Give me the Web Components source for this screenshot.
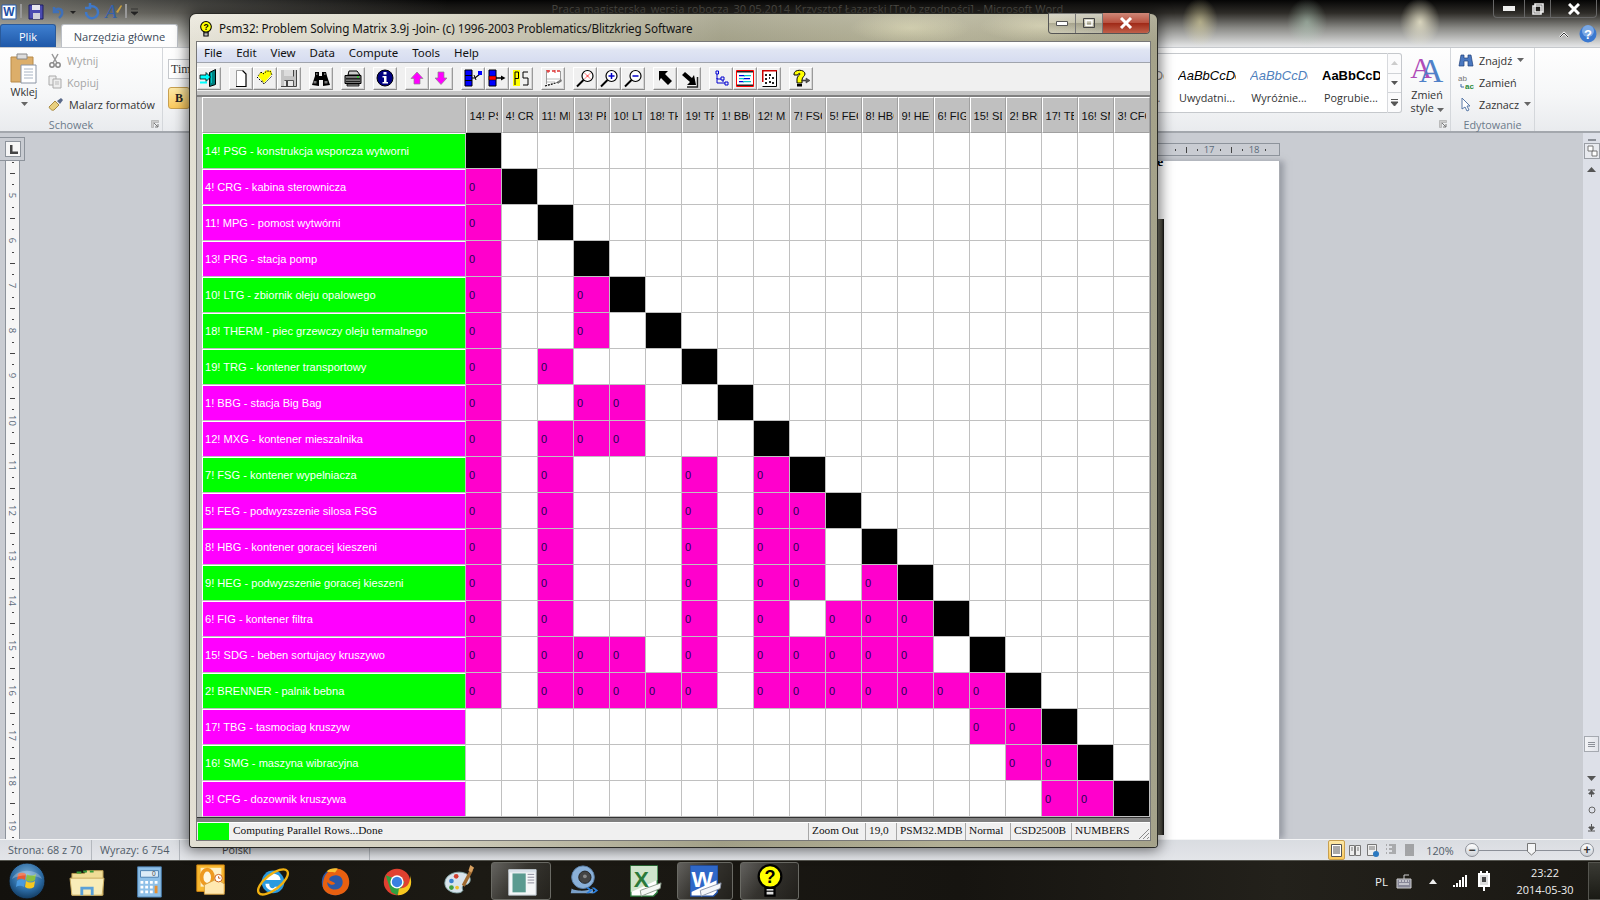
<!DOCTYPE html>
<html lang="pl">
<head>
<meta charset="utf-8">
<title>Psm32</title>
<style>
html, body { margin: 0; padding: 0; }
body { width: 1600px; height: 900px; overflow: hidden; position: relative; background: #c9ccd2; font-family: "Open Sans", "Liberation Sans", sans-serif; }
#word { display: grid; grid-template-rows: 47px 86px 706px 21px 40px; width: 1600px; height: 900px; }
</style>
</head>
<body>
<div id="word">
    <word-top></word-top>
    <word-ribbon></word-ribbon>
    <word-doc></word-doc>
    <word-status></word-status>
    <win-taskbar></win-taskbar>
</div>
<psm-window>
    <psm-menu></psm-menu>
    <psm-toolbar></psm-toolbar>
    <psm-matrix></psm-matrix>
    <psm-status></psm-status>
</psm-window>

<script>
// 工具栏图标
const TOOL_ICONS = {
    exit: `<path d="M12.500 5.500l6-3v15l-6 2z" fill="#008080" stroke="#000"/><path d="M14.500 6v10" stroke="#00c8c8"/><path d="M3 8h6V5.500l4.500 4.500L9 14.500V12H3z" fill="#00ffff" stroke="#000" stroke-width=".8"/><path d="M3 15.500h7" stroke="#00ffff" stroke-width="2"/>`,
    page: `<path d="M7.500 3.500h6l3.500 3.500v12.500H7.500z" fill="#fff"/><path d="M7.500 19.500V3.500M7.500 3.500h6" stroke="#999" fill="none"/><path d="M13.500 3.500l3.500 3.500v12.500H7" stroke="#000" fill="none" stroke-width="1.200"/>`,
    open: `<path d="M5 9l3-4 2 1 3-3 2 1 3-1 1 4-8 9z" fill="#ffff00"/><path d="M4 10l7 7 8-8M8 5l2 2 4-3 3 0 2 4" fill="none" stroke="#000" stroke-dasharray="1.500 1.200"/><path d="M5 9l3-4M11 17l-2-4" stroke="#333" stroke-dasharray="1 1"/>`,
    save: `<path d="M4 3h16v16H4z" fill="#c4c4c4"/><path d="M7 3h9v6H7z" fill="#dcdcdc"/><path d="M19.500 3v16.500H4M16.500 3v6.500" stroke="#444" fill="none"/><path d="M7.500 13.500h9v6" stroke="#555" fill="none"/><path d="M7 14h9v5H7z" fill="#e8e8e8"/><path d="M9 14h2v5H9z" fill="#444"/>`,
    binoc: `<path d="M6 5h4v4h3V5h4l1 4 3 9-7 1v-6h-4v6l-7-1 3-9z" fill="#000"/><path d="M4.500 14h3v2.500h-3zM15.500 14h3v2.500h-3z" fill="#777"/><path d="M7 6h1.500v2H7zM15 6h1.500v2H15z" fill="#666"/>`,
    print: `<path d="M8 4h8l3 4H7z" fill="#ccc" stroke="#000"/><path d="M4 8.500h16v8H4z" fill="#777" stroke="#000"/><path d="M5 11h14v1.500H5zM5 14h14v1H5z" fill="#222"/><path d="M16 9.500h2v1h-2z" fill="#0f0"/><path d="M6 17h12v2H6z" fill="#999" stroke="#000" stroke-width=".8"/>`,
    info: `<circle cx="12" cy="11" r="8" fill="#000080" stroke="#000"/><path d="M10.500 5h3v2.500h-3zM9.500 9h4v6h1.500v1.500H9.500V15H11v-4.500H9.500z" fill="#fff"/>`,
    up: `<path d="M12 5l6 6.500h-3V17H9v-5.500H6z" fill="#ff00ff" stroke="#888" stroke-width=".7"/>`,
    down: `<path d="M9 5h6v6h3l-6 6.500L6 11h3z" fill="#ff00ff" stroke="#888" stroke-width=".7"/>`,
    joina: `<path d="M4 3h7v16H4z" fill="#0000ff" stroke="#000"/><path d="M4 8.500h7M4 13.500h7" stroke="#000"/><path d="M11 11h3l5-4" stroke="#000" fill="none" stroke-width="1.200"/><path d="M13 8l2 5" stroke="#000"/><path d="M17 4h4v4h-4z" fill="#0000ff"/>`,
    joinb: `<path d="M4 3h7v16H4z" fill="#0000ff" stroke="#000"/><path d="M4 9h7v4H4z" fill="#ff0000" stroke="#000" stroke-width=".5"/><path d="M11 11h6" stroke="#000" stroke-width="1.500"/><path d="M16 8.500l4.500 2.500-4.500 2.500z" fill="#000"/>`,
    ps: `<path d="M4 3h7v16H4z" fill="#ffff00"/><path d="M6 18V5h3.500v6.500H6M14 11V5h5M14 11h5v7h-5" fill="none" stroke="#000"/>`,
    edit: `<path d="M5.500 3.500h14v14h-14z" fill="#fff"/><path d="M5 4h4M11 4h3M16 4h3" stroke="#d33" stroke-width="1.500"/><path d="M7 3v3M14 3v3" stroke="#d33"/><path d="M19.500 4v11M5.500 4v13" stroke="#999"/><path d="M6 12h13M6 15h8" stroke="#bbb"/><path d="M4 19l14-4" stroke="#000" stroke-dasharray="2 1" stroke-width="1.200"/><path d="M16 15l4-3 1 2-4 3z" fill="#777"/>`,
    zoomx: `<circle cx="14.500" cy="9" r="5.500" fill="#fff" stroke="#000" stroke-width="1.200"/><path d="M10.500 13L4 19.500" stroke="#000" stroke-width="2"/><path d="M12 11.500l5-5M12 6.500l5 5" stroke="#f00" stroke-dasharray="1.300 .6"/>`,
    zoomin: `<circle cx="14.500" cy="9" r="5.500" fill="#fff" stroke="#000" stroke-width="1.200"/><path d="M10.500 13L4 19.500" stroke="#000" stroke-width="2"/><path d="M11.500 9h6M14.500 6v6" stroke="#0000c8" stroke-width="1.500"/>`,
    zoomout: `<circle cx="14.500" cy="9" r="5.500" fill="#fff" stroke="#000" stroke-width="1.200"/><path d="M10.500 13L4 19.500" stroke="#000" stroke-width="2"/><path d="M11.500 9h6" stroke="#0000c8" stroke-width="1.500"/>`,
    nw: `<path d="M6 4h9l-3 3 7 7-4 4-7-7-2 3z" fill="#000"/>`,
    se: `<path d="M5 8l3-3 7 6 2-3 2 10h-9l3-3z" fill="#000"/><path d="M20.500 10v10H10" fill="none" stroke="#222" stroke-width="1.500"/>`,
    tree: `<path d="M7 4h2.500v3H7zM12 10h3v3h-3zM16 15h3v3h-3z" fill="none" stroke="#0000d0"/><path d="M8 7v5h4M8 11v5h8M14 13v2" fill="none" stroke="#0000d0"/>`,
    rows: `<path d="M4 4h16v15H4z" fill="#fff"/><path d="M3.500 3.500h17v16h-17z" fill="none" stroke="#f00"/><path d="M4 4h16v1.500H4zM4 17.500h16V19H4z" fill="#222"/><path d="M6 8h6v1.300H6zM10 11h7v1.300h-7zM6 14h5v1.300H6z" fill="#0000e0"/><path d="M11 8h7v1.300h-7zM6 11h5v1.300H6zM10 14h8v1.300h-8z" fill="#00c8c8"/>`,
    grid: `<path d="M5 3h15v16H5z" fill="#fff"/><path d="M19.500 3.500v16h-14" fill="none" stroke="#000"/><path d="M5 3h15v1.500H5zM5 3h1.500v12H5z" fill="#c00"/><path d="M8 7h2v2H8zM12 7h2v2h-2zM15 10h2v2h-2zM8 11h2v2H8zM12 14h2v2h-2zM8 15h2v2H8zM15 15h2v2h-2zM12 10h1v2h-1z" fill="#222"/>`,
    help: `<path d="M5 7c0-5 11-5 11 0 0 2-3 3-3 6v3H8v-4c0-3 3-4 3-5 0-1-2-1-2 1H5z" fill="#ffff00" stroke="#000"/><path d="M8 17h5v2.500H8z" fill="#000"/><path d="M13 13h4v-2l4 2.500-4 2.500v-2h-4z" fill="#555" stroke="#222" stroke-width=".5"/>`
};

const BULB = (w, h) => `<svg width="${w}" height="${h}" viewBox="0 0 24 30"><circle cx="12" cy="11" r="10" fill="#ff0" stroke="#000" stroke-width="2"/><path d="M8 21h8v7H8z" fill="#ddd" stroke="#000" stroke-width="2"/><path d="M8 24h8" stroke="#000"/><text x="12" y="17" font-family="Liberation Sans, sans-serif" font-weight="700" font-size="16" text-anchor="middle">?</text></svg>`;

class ToolBtn extends HTMLElement {
    connectedCallback() {
        this.attachShadow({ mode: 'open' });
        this.shadowRoot.innerHTML = `
        <style>
        :host { display: block; width: 24px; height: 23px; box-sizing: border-box; background: #f0f0f0;
            border: 1px solid; border-color: #fff #9a9a9a #8a8a8a #fff; box-shadow: inset -1px -1px 0 #d4d4d4; }
        svg { display: block; margin: -1px 0 0 -1px; }
        </style>
        <svg width="24" height="23" viewBox="0 0 24 23">${TOOL_ICONS[this.getAttribute('icon')]}</svg>`;
    }
}
customElements.define('tool-btn', ToolBtn);

class PsmToolbar extends HTMLElement {
    connectedCallback() {
        const groups = [['exit'], ['page', 'open', 'save'], ['binoc'], ['print'], ['info'], ['up', 'down'],
            ['joina', 'joinb', 'ps'], ['edit'], ['zoomx', 'zoomin', 'zoomout'], ['nw', 'se'], ['tree', 'rows', 'grid'], ['help']];
        this.attachShadow({ mode: 'open' });
        this.shadowRoot.innerHTML = `
        <style>
        :host { display: flex; gap: 8px; height: 28px; box-sizing: border-box; padding-top: 4px; background: #f0f0f0; }
        div { display: flex; }
        </style>
        ${groups.map(g => `<div>${g.map(i => `<tool-btn icon="${i}"></tool-btn>`).join('')}</div>`).join('')}`;
    }
}
customElements.define('psm-toolbar', PsmToolbar);

class PsmMenu extends HTMLElement {
    connectedCallback() {
        this.attachShadow({ mode: 'open' });
        this.shadowRoot.innerHTML = `
        <style>
        :host { display: flex; gap: 14px; height: 21px; box-sizing: border-box; padding: 2px 0 0 7px; color: #111;
            font: 11.500px/17px "Noto Sans", sans-serif; letter-spacing: -.05px;
            background: linear-gradient(#fff, #fff 2px, #e0e5f3 8px, #d6dcf0); border-bottom: 1px solid #a0a4ad; }
        </style>
        <span>File</span><span>Edit</span><span>View</span><span>Data</span><span>Compute</span><span>Tools</span><span>Help</span>`;
    }
}
customElements.define('psm-menu', PsmMenu);

class PsmMatrix extends HTMLElement {
    connectedCallback() {
        const rows = [['14! PSG', 'konstrukcja wsporcza wytworni', 1], ['4! CRG', 'kabina sterownicza', 0], ['11! MPG', 'pomost wytwórni', 0],
            ['13! PRG', 'stacja pomp', 0], ['10! LTG', 'zbiornik oleju opalowego', 1], ['18! THERM', 'piec grzewczy oleju termalnego', 1],
            ['19! TRG', 'kontener transportowy', 1], ['1! BBG', 'stacja Big Bag', 0], ['12! MXG', 'kontener mieszalnika', 0],
            ['7! FSG', 'kontener wypelniacza', 1], ['5! FEG', 'podwyzszenie silosa FSG', 0], ['8! HBG', 'kontener goracej kieszeni', 0],
            ['9! HEG', 'podwyzszenie goracej kieszeni', 1], ['6! FIG', 'kontener filtra', 0], ['15! SDG', 'beben sortujacy kruszywo', 0],
            ['2! BRENNER', 'palnik bebna', 1], ['17! TBG', 'tasmociag kruszyw', 0], ['16! SMG', 'maszyna wibracyjna', 1], ['3! CFG', 'dozownik kruszywa', 0]];
        // 每行里标 0 的列
        const zeros = [[], [0], [0], [0], [0, 3], [0, 3], [0, 2], [0, 3, 4], [0, 2, 3, 4], [0, 2, 6, 8], [0, 2, 6, 8, 9], [0, 2, 6, 8, 9],
            [0, 2, 6, 8, 9, 11], [0, 2, 6, 8, 10, 11, 12], [0, 2, 3, 4, 6, 8, 9, 10, 11, 12], [0, 2, 3, 4, 5, 6, 8, 9, 10, 11, 12, 13, 14],
            [14, 15], [15, 16], [16, 17]];
        let html = '<div class="hd"></div>';
        rows.forEach(r => { html += `<div class="hd"><span>${r[0]}</span></div>`; });
        rows.forEach((r, y) => {
            html += `<div class="lb ${r[2] ? 'g' : 'm'}">${r[0]} - ${r[1]}</div>`;
            rows.forEach((c, x) => {
                if (x === y) html += '<div class="c k"></div>';
                else if (zeros[y].includes(x)) html += '<div class="c p">0</div>';
                else html += '<div class="c"></div>';
            });
        });
        this.attachShadow({ mode: 'open' });
        this.shadowRoot.innerHTML = `
        <style>
        :host { display: block; padding: 6px 0 0 5px; background: linear-gradient(#c4c4c4, #c4c4c4 4px, #808080 4px, #808080 6px, #c0c0c0 6px); }
        .g0 { display: grid; grid-template-columns: 264px repeat(19, 36px); grid-auto-rows: 36px;
            font: 11.100px/1 "Liberation Sans", sans-serif; }
        .g0 > div { box-sizing: border-box; display: flex; align-items: center; white-space: nowrap; overflow: hidden; }
        .hd { background: #c0c0c0; color: #111; border-left: 1px solid #fff; border-top: 1px solid #fff; border-right: 1px solid #a0a0a0; border-bottom: 1px solid #a0a0a0; padding: 4px 3px 0 2.500px; }
        .hd span { display: block; overflow: hidden; }
        .lb { color: #fff; padding: 2px 0 0 2px; border-top: 1px solid #fff; border-left: 1px solid #fff; border-bottom: 1px solid #c0c0c0; border-right: 1px solid #c0c0c0; }
        .g { background: #00ff00; }
        .m { background: #ff00ff; }
        .c { background: #fff; border-right: 1px solid #c0c0c0; border-bottom: 1px solid #c0c0c0; padding: 2px 0 0 3px; color: #220055; }
        .k { background: #000; }
        .p { background: #ff00cc; }
        </style>
        <div class="g0">${html}</div>`;
    }
}
customElements.define('psm-matrix', PsmMatrix);

class PsmStatus extends HTMLElement {
    connectedCallback() {
        const cells = [['Zoom Out', 57], ['19,0', 31], ['PSM32.MDB', 69], ['Normal', 45], ['CSD2500B', 61], ['NUMBERS', 79]];
        this.attachShadow({ mode: 'open' });
        this.shadowRoot.innerHTML = `
        <style>
        :host { display: flex; flex-direction: column; height: 23px; box-sizing: border-box; background: #f0f0f0; border-top: 1px solid #333; font: 11.300px/14px "Liberation Serif", serif; color: #111; }
        .grey { height: 4px; background: #808080; }
        .bar { flex: 1; display: flex; border-top: 1px solid #fff; align-items: stretch; }
        .box { width: 31px; margin: 0 4px 0 1px; background: #00ff00; }
        .msg { flex: 1; }
        .cell { box-sizing: border-box; padding-left: 3px; border-left: 1px solid #a8a8a8; white-space: nowrap; overflow: hidden; }
        .grip { position: relative; width: 0; }
        svg { position: absolute; right: 0; bottom: 0; }
        </style>
        <div class="grey"></div>
        <div class="bar">
            <div class="box"></div>
            <div class="msg">Computing Parallel Rows...Done</div>
            ${cells.map(c => `<div class="cell" style="width:${c[1]}px">${c[0]}</div>`).join('')}
            <div class="grip"><svg width="14" height="14" viewBox="0 0 14 14"><path d="M13 3L3 13M13 7l-6 6M13 11l-2 2" stroke="#8a8a8a" fill="none"/></svg></div>
        </div>`;
    }
}
customElements.define('psm-status', PsmStatus);

class PsmWindow extends HTMLElement {
    connectedCallback() {
        this.attachShadow({ mode: 'open' });
        this.shadowRoot.innerHTML = `
        <style>
        :host { position: absolute; left: 190px; top: 14px; width: 967px; height: 833px; box-sizing: border-box; display: flex; flex-direction: column;
            border-radius: 6px 6px 3px 3px; box-shadow: 0 0 0 1px #2a2a26, 0 0 14px 3px rgba(0,0,0,.55);
            background: linear-gradient(rgba(255,255,255,.12), rgba(120,118,90,.08) 30px),
                radial-gradient(ellipse 60px 16px at 720px 14px, rgba(220,216,180,.7), transparent),
                radial-gradient(ellipse 60px 16px at 850px 12px, rgba(230,225,190,.6), transparent),
                linear-gradient(90deg, #ece9de, #d9d6c6 25%, #a5a38b 55%, #b7b49a 78%, #a9a68e);
            padding: 0 7px 7px 7px; }
        .title { height: 28px; display: flex; align-items: center; font: 11.700px "Noto Sans", sans-serif; color: #141414; letter-spacing: -.1px; position: relative; }
        .title svg { margin: 1px 6px 0 2px; }
        .caps { position: absolute; right: 0; top: -1px; display: flex; height: 20px; border: 1px solid #555; border-top: 0; border-radius: 0 0 4px 4px; overflow: hidden; }
        .caps div { display: flex; align-items: center; justify-content: center; width: 27px; height: 20px; background: linear-gradient(rgba(255,255,255,.4), rgba(255,255,255,.1) 50%, rgba(60,60,50,.2) 52%, rgba(255,255,255,.2)); border-right: 1px solid #777; box-sizing: border-box; }
        .caps .x { width: 46px; border: 0; background: linear-gradient(#cf8878, #b8503e 50%, #a02a18 52%, #c0604a); }
        .body { flex: 1; display: flex; flex-direction: column; background: #fff; box-shadow: 0 0 0 1px #777; overflow: hidden; }
        </style>
        <div class="title">
            ${BULB(14, 16)}<span>Psm32: Problem Solving Matrix 3.9j -Join- (c) 1996-2003 Problematics/Blitzkrieg Software</span>
            <div class="caps">
                <div><svg style="margin:0" width="12" height="6"><path d="M.5 1.500h11v4H.5z" fill="#fff" stroke="#555"/></svg></div>
                <div><svg style="margin:0" width="12" height="10"><path d="M.5.5h11v9H.5z" fill="none" stroke="#444"/><path d="M3 2.500h6v5H3z" fill="none" stroke="#fff" stroke-width="1.500"/></svg></div>
                <div class="x"><svg style="margin:0" width="14" height="12"><path d="M2 1l10 10M12 1L2 11" stroke="#fff" stroke-width="3"/></svg></div>
            </div>
        </div>
        <div class="body"><slot></slot></div>`;
    }
}
customElements.define('psm-window', PsmWindow);

class WordTop extends HTMLElement {
    connectedCallback() {
        this.attachShadow({ mode: 'open' });
        this.shadowRoot.innerHTML = `
        <style>
        :host { display: flex; flex-direction: column; position: relative; font: 11.100px "Open Sans", sans-serif;
            background:
                radial-gradient(ellipse 18px 24px at 1200px 22px, rgba(240,230,170,.55), transparent),
                radial-gradient(ellipse 20px 24px at 1307px 22px, rgba(190,220,200,.5), transparent),
                radial-gradient(ellipse 20px 24px at 1420px 22px, rgba(255,250,220,.75), transparent),
                linear-gradient(90deg, rgba(190,190,180,.55), transparent 28%, transparent 100%),
                linear-gradient(#050505, #2e2c28 13px, #8a8a86 28px, #d8d9d9 44px, #e4e5e7 47px); }
        .row1 { height: 24px; display: flex; align-items: flex-start; }
        .qat { width: 140px; height: 20px; position: relative; flex: none; }
        .qat svg { display: block; }
        .ttl { flex: 1; text-align: center; padding: 1px 18px 0 0; color: #55534c; white-space: nowrap; overflow: hidden; }
        .caps { width: 104px; margin-right: 3px; height: 18px; flex: none; display: flex; border: 1px solid #666; border-top: 0; border-radius: 0 0 4px 4px; box-sizing: border-box; }
        .caps div { display: flex; justify-content: center; align-items: center; border-right: 1px solid #666; box-sizing: border-box; }
        .row2 { height: 23px; display: flex; align-items: flex-end; position: relative; }
        .plik { width: 56px; height: 23px; background: linear-gradient(#3e7fd0, #1f58a8); color: #fff; text-align: center; line-height: 23px; border-radius: 3px 3px 0 0; border: 1px solid #2a5a9a; border-bottom: 0; box-sizing: border-box; margin-right: 5px; }
        .tab { width: 117px; height: 23px; background: linear-gradient(#fff, #fdfdfd); text-align: center; line-height: 23px; color: #3c4a5a; border: 1px solid #bcc0c6; border-bottom: 0; border-radius: 3px 3px 0 0; box-sizing: border-box; }
        .help { position: absolute; right: 0; top: 1px; display: flex; align-items: center; gap: 10px; padding-right: 3px; }
        </style>
        <div class="row1">
            <div class="qat">
                <svg width="140" height="20" viewBox="0 0 140 20">
                    <path d="M2 5h14v14H2z" fill="#fff" stroke="#2b5fb0"/><text x="9" y="16" font-family="Liberation Sans, sans-serif" font-weight="700" font-size="12" fill="#1c4fa8" text-anchor="middle">W</text>
                    <path d="M21 4v14" stroke="#999" stroke-width="2"/>
                    <path d="M29 5h14v14H29z" fill="#4a4ab0" stroke="#1c1c60"/><path d="M32 5h8v5h-8z" fill="#e8e8f0"/><path d="M33 13h7v6h-7z" fill="#d0d0d8"/>
                    <path d="M54 7v5h5M54 12c3-5 9-4 8 2-.5 2-2 3-3 4" fill="none" stroke="#3f70b8" stroke-width="2.500"/>
                    <path d="M70 11h6l-3 3z" fill="#222"/>
                    <path d="M86 12a6 6 0 1 0 3-5M90 3v5h-5" fill="none" stroke="#3f78c8" stroke-width="2.500"/>
                    <text x="111" y="18" font-family="Liberation Serif, serif" font-style="italic" font-size="19" fill="#3560a8" text-anchor="middle">A</text>
                    <path d="M116 12l5-7 1 1-4 7z" fill="#c8a040"/>
                    <path d="M126 4v14" stroke="#999" stroke-width="2"/>
                    <path d="M131 9h7M131 12h7l-3.500 3z" fill="#222" stroke="#222" stroke-width=".7"/>
                </svg>
            </div>
            <div class="ttl">Praca magisterska_wersja robocza_30.05.2014_Krzysztof Łazarski [Tryb zgodności] - Microsoft Word</div>
            <div class="caps">
                <div style="width:31px"><svg width="12" height="5"><path d="M0 0h12v5H0z" fill="#eee"/></svg></div>
                <div style="width:26px"><svg width="12" height="12"><path d="M3 1h8v8H3zM1 3h8v8H1z" fill="none" stroke="#eee" stroke-width="1.600"/></svg></div>
                <div style="width:45px;border:0"><svg width="12" height="12"><path d="M1 1l10 10M11 1L1 11" stroke="#fff" stroke-width="3"/></svg></div>
            </div>
        </div>
        <div class="row2">
            <div class="plik">Plik</div><div class="tab">Narzędzia główne</div>
            <div class="help">
                <svg width="10" height="7"><path d="M1 6l4-4 4 4" fill="none" stroke="#fff" stroke-width="2"/><path d="M1 6l4-4 4 4" fill="none" stroke="#333"/></svg>
                <svg width="18" height="18"><circle cx="9" cy="9" r="8.500" fill="#3a78d0"/><circle cx="9" cy="6" r="6" fill="#7aa8e4"/><text x="9" y="14" font-family="Liberation Sans, sans-serif" font-weight="700" font-size="13" fill="#fff" text-anchor="middle">?</text></svg>
            </div>
        </div>`;
    }
}
customElements.define('word-top', WordTop);

class WordRibbon extends HTMLElement {
    connectedCallback() {
        this.attachShadow({ mode: 'open' });
        this.shadowRoot.innerHTML = `
        <style>
        :host { display: flex; box-sizing: border-box; height: 86px; background: linear-gradient(#fefefe, #f6f7f8 55%, #e9ebee); border-bottom: 2px solid #a3a7ad; border-top: 1px solid #c6c9cd; font: 10.800px "Open Sans", sans-serif; color: #333; }
        .grp { position: relative; border-right: 1px solid #d4d7db; box-sizing: border-box; flex: none; }
        .lab { position: absolute; left: 0; right: 0; bottom: -1px; text-align: center; color: #6b7a8a; line-height: 14px; }
        .launch { position: absolute; right: 3px; bottom: 3px; }
        .clip { width: 163px; display: flex; }
        .clip .lab { right: 20px; }
        .paste { width: 48px; display: flex; flex-direction: column; align-items: center; padding-top: 5px; line-height: 14px; }
        .paste svg { display: block; }
        .paste .a { margin-top: 3px; }
        .items { display: flex; flex-direction: column; padding-top: 1px; }
        .it { display: flex; align-items: center; height: 22px; gap: 5px; white-space: nowrap; }
        .it svg { flex: none; }
        .off { color: #a5a5a5; }
        .font { width: 200px; padding: 11px 0 0 5px; }
        .tim { width: 60px; height: 20px; background: #fff; border: 1px solid #c5c8cc; box-sizing: border-box; font: 12px/18px "Liberation Serif", serif; padding-left: 2px; }
        .bold { width: 22px; height: 22px; margin-top: 8px; box-sizing: border-box; background: linear-gradient(#fde9a8, #fbc95c); border: 1px solid #c8a050; border-radius: 3px; font: 700 12px/20px "Liberation Serif", serif; text-align: center; color: #222; }
        .fill { flex: 1; }
        .styles { display: flex; padding-right: 48px; }
        .gal { display: flex; height: 60px; margin-top: 5px; background: #fff; border: 1px solid #c5c8cc; border-right: 0; box-sizing: border-box; }
        .sty { width: 72px; box-sizing: border-box; padding-top: 14px; text-align: center; line-height: 14px; overflow: hidden; white-space: nowrap; }
        .smp { display: block; width: 58px; margin: 0 auto 7px; overflow: hidden; font: 13px/16px "Liberation Sans", sans-serif; color: #000; text-align: left; }
        .scr { width: 15px; margin-top: 5px; height: 60px; border: 1px solid #c5c8cc; border-left-color: #d8dade; border-radius: 0 3px 3px 0; box-sizing: border-box; display: flex; flex-direction: column; background: #fbfbfc; flex: none; }
        .scr div { flex: 1; border-bottom: 1px solid #d0d3d7; display: flex; align-items: center; justify-content: center; }
        .zm { position: absolute; right: 5px; top: 6px; width: 36px; display: flex; flex-direction: column; align-items: center; line-height: 13px; text-align: center; }
        .zm span { margin-top: 2px; }
        .edit { width: 84px; padding: 0 0 0 7px; }
        .end { width: 65px; flex: none; }
        </style>
        <div class="grp clip">
            <div class="paste">
                <svg width="30" height="32" viewBox="0 0 30 32"><path d="M2 4h22v25H2z" fill="#dcae6a" stroke="#b88a48" /><path d="M8 1h10v5H8z" fill="#ddd" stroke="#888"/><path d="M12 12h15v18H12z" fill="#fff" stroke="#8a94a4"/><path d="M15 16h9M15 19h9M15 22h9M15 25h9" stroke="#a8b4c4"/></svg>
                <span>Wklej</span>
                <svg class="a" width="7" height="4"><path d="M0 0h7L3.500 4z" fill="#666"/></svg>
            </div>
            <div class="items">
                <div class="it off"><svg width="14" height="15" viewBox="0 0 14 15"><path d="M4 1l5 9M10 1L5 10" stroke="#999" stroke-width="1.500"/><circle cx="4" cy="12" r="2.200" fill="none" stroke="#888" stroke-width="1.500"/><circle cx="10" cy="12" r="2.200" fill="none" stroke="#888" stroke-width="1.500"/></svg>Wytnij</div>
                <div class="it off"><svg width="14" height="14" viewBox="0 0 14 14"><path d="M1 1h7v9H1z" fill="#eee" stroke="#aaa"/><path d="M5 4h8v9H5z" fill="#eee" stroke="#aaa"/><path d="M7 7h4M7 9h4" stroke="#bbb"/></svg>Kopiuj</div>
                <div class="it"><svg width="16" height="14" viewBox="0 0 16 14"><path d="M1 10l6-6 4 4-5 5c-2 1-4-1-5-3z" fill="#e8d080" stroke="#a88a40"/><path d="M9 4l4-3 2 2-3 4z" fill="#5a6a8a"/></svg>Malarz formatów</div>
            </div>
            <div class="lab">Schowek</div>
            <svg class="launch" width="8" height="8"><path d="M.5.5h7v2h-5v5h-2z" fill="#ccc" stroke="#999" stroke-width=".5"/><path d="M3 3l4 4M7 4v3H4" stroke="#777" fill="none"/></svg>
        </div>
        <div class="font grp" style="border:0">
            <div class="tim">Tim</div>
            <div class="bold">B</div>
        </div>
        <div class="fill"></div>
        <div class="grp styles">
            <div class="gal">
                <div class="sty" style="color:#666"><span class="smp" style="color:#888">AaBbCcDc</span>Podtytuł...</div>
                <div class="sty"><span class="smp" style="font-style:italic">AaBbCcDc</span>Uwydatni...</div>
                <div class="sty"><span class="smp" style="font-style:italic;color:#4f81bd">AaBbCcDc</span>Wyróżnie...</div>
                <div class="sty"><span class="smp" style="font-weight:700">AaBbCcDc</span>Pogrubie...</div>
            </div>
            <div class="scr">
                <div><svg width="7" height="4"><path d="M0 4h7L3.500 0z" fill="#ccc"/></svg></div>
                <div><svg width="7" height="4"><path d="M0 0h7L3.500 4z" fill="#555"/></svg></div>
                <div style="border:0"><svg width="9" height="7"><path d="M1 .5h7M1 3h7L4.500 7z" fill="#555" stroke="#555"/></svg></div>
            </div>
            <div class="zm">
                <svg width="34" height="32" viewBox="0 0 34 32">
                    <text x="11" y="24" font-family="Liberation Serif, serif" font-size="30" fill="#b04cb8" text-anchor="middle">A</text>
                    <text x="21" y="28" font-family="Liberation Serif, serif" font-size="34" fill="#4f81c8" text-anchor="middle">A</text>
                </svg>
                <span>Zmień<br>style <svg width="7" height="4"><path d="M0 0h7L3.500 4z" fill="#666"/></svg></span>
            </div>
            <svg class="launch" width="8" height="8"><path d="M.5.5h7v2h-5v5h-2z" fill="#ccc" stroke="#999" stroke-width=".5"/><path d="M3 3l4 4M7 4v3H4" stroke="#777" fill="none"/></svg>
        </div>
        <div class="grp edit">
            <div class="items">
                <div class="it"><svg width="16" height="13" viewBox="0 0 16 13"><path d="M3 1h3v3h4V1h3l2 11h-5V7H6v5H1z" fill="#4a78c0" stroke="#1f3f78" stroke-width=".7"/></svg>Znajdź <svg width="7" height="4"><path d="M0 0h7L3.500 4z" fill="#666"/></svg></div>
                <div class="it"><svg width="16" height="15" viewBox="0 0 16 15"><text x="0" y="6" font-family="Liberation Sans, sans-serif" font-size="8" fill="#777">ab</text><text x="7" y="14" font-family="Liberation Sans, sans-serif" font-weight="700" font-size="8" fill="#2a8a3a">ac</text><path d="M3 9v3h3" fill="none" stroke="#3a66a8"/></svg>Zamień</div>
                <div class="it"><svg width="16" height="15" viewBox="0 0 16 15"><path d="M4 1v11l3-2 2 4 2-1-2-4h3z" fill="#fff" stroke="#5a7aa8"/></svg>Zaznacz <svg width="7" height="4"><path d="M0 0h7L3.500 4z" fill="#666"/></svg></div>
            </div>
            <div class="lab">Edytowanie</div>
        </div>
        <div class="end"></div>`;
    }
}
customElements.define('word-ribbon', WordRibbon);

class VRuler extends HTMLElement {
    connectedCallback() {
        let marks = '';
        for (let n = 5; n <= 20; n++) {
            marks += `<i class="d"></i><i class="l"></i><i class="d"></i>`;
            if (n < 20) marks += `<b><span>${n}</span></b>`;
        }
        this.attachShadow({ mode: 'open' });
        this.shadowRoot.innerHTML = `
        <style>
        :host { display: block; width: 13px; margin-left: 5px; flex: 1; background: #f6f6f6; border-left: 1px solid #8d939b; border-right: 1px solid #8d939b; overflow: hidden; }
        div { margin-top: -4.600px; }
        i, b { display: flex; height: 11.250px; align-items: center; justify-content: center; font: 400 9.500px "Open Sans", sans-serif; color: #5a6a7a; }
        i::after { content: ""; display: block; background: #444; height: 1px; }
        .d::after { width: 2px; }
        .l::after { width: 5px; }
        span { transform: rotate(90deg); }
        </style>
        <div>${marks}</div>`;
    }
}
customElements.define('v-ruler', VRuler);

class HRuler extends HTMLElement {
    connectedCallback() {
        this.attachShadow({ mode: 'open' });
        this.shadowRoot.innerHTML = `
        <style>
        :host { display: flex; justify-content: flex-end; align-items: center; height: 13px; margin-top: 10px; box-sizing: border-box; background: #c9ccd2; border: 1px solid #8d939b; padding-right: 8px; font: 9.500px "Open Sans", sans-serif; color: #5a6a7a; position: relative; }
        i, b { display: flex; width: 11.250px; justify-content: center; align-items: center; font-weight: 400; }
        i::after { content: ""; display: block; background: #444; width: 1px; }
        .d::after { height: 2px; }
        .l::after { height: 6px; }
        </style>
        <i class="d"></i><i class="l"></i><i class="d"></i><b>17</b><i class="d"></i><i class="l"></i><i class="d"></i><b>18</b><i class="d"></i>`;
    }
}
customElements.define('h-ruler', HRuler);

class WordScroll extends HTMLElement {
    connectedCallback() {
        this.attachShadow({ mode: 'open' });
        this.shadowRoot.innerHTML = `
        <style>
        :host { display: flex; flex-direction: column; align-items: center; width: 17px; background: #dde0e8; position: relative; flex: none; }
        .bar { width: 8px; height: 2px; background: #8c9098; margin-top: 6px; }
        .btn { margin-top: 2px; width: 16px; height: 16px; box-sizing: border-box; border: 1px solid #9a9ea5; background: #e8eaef; }
        .up { margin-top: 8px; }
        .thumb { margin-top: 564px; width: 15px; height: 16px; box-sizing: border-box; border: 1px solid #a5a9b0; background: linear-gradient(90deg, #f2f3f6, #e2e4ea); display: flex; flex-direction: column; justify-content: center; gap: 1px; align-items: center; }
        .thumb i { display: block; width: 7px; height: 1px; background: #8c9098; }
        .s1 { margin-top: 24px; }
        .s2 { margin-top: 8px; }
        .s3 { margin-top: 8px; }
        .s4 { margin-top: 9px; }
        svg { display: block; }
        </style>
        <div class="bar"></div>
        <div class="btn"><svg width="14" height="14"><path d="M3 2h5v5H3zM7 7h5v5H7z" fill="#fff" stroke="#777"/></svg></div>
        <svg class="up" width="9" height="5"><path d="M0 5h9L4.500 0z" fill="#555"/></svg>
        <div class="thumb"><i></i><i></i><i></i></div>
        <svg class="s1" width="9" height="5"><path d="M0 0h9L4.500 5z" fill="#555"/></svg>
        <svg class="s2" width="7" height="9"><path d="M0 1h7M3.500 1v7M1 5h5" stroke="#555"/><path d="M0 5l3.500-4L7 5z" fill="#555"/></svg>
        <svg class="s3" width="8" height="8"><circle cx="4" cy="4" r="3" fill="none" stroke="#666"/></svg>
        <svg class="s4" width="7" height="9"><path d="M0 8h7M3.500 1v7M1 4h5" stroke="#555"/><path d="M0 4l3.500 4L7 4z" fill="#555"/></svg>`;
    }
}
customElements.define('word-scroll', WordScroll);

class WordDoc extends HTMLElement {
    connectedCallback() {
        this.attachShadow({ mode: 'open' });
        this.shadowRoot.innerHTML = `
        <style>
        :host { display: flex; background: #c9ccd2; overflow: hidden; min-height: 0; }
        .left { width: 25px; flex: none; display: flex; flex-direction: column; }
        .corner { height: 24px; margin-top: 4px; width: 25px; box-sizing: border-box; border: 1px solid #8d939b; border-left: 0; display: flex; align-items: center; padding-left: 5px; }
        .corner div { width: 14px; height: 14px; background: #f6f6f6; border: 1px solid #8d939b; display: flex; align-items: center; justify-content: center; }
        .main { flex: 1; display: flex; flex-direction: column; min-width: 0; }
        .hr { height: 28px; padding: 0 0 0 905px; box-sizing: border-box; width: 1255px; }
        .page { flex: 1; width: 1039px; margin-left: 215px; background: #fff; box-shadow: 1px 0 0 #a9acb2, 5px 0 6px rgba(120,125,135,.6); display: flex; flex-direction: column; align-items: flex-end; overflow: hidden; padding-right: 115px; box-sizing: border-box; font: 14px/14px "Liberation Serif", serif; }
        .e { margin-top: -6px; color: #000; width: 7px; font-weight: 700; }
        .tb { margin-top: 50px; width: 6px; height: 616px; background: linear-gradient(90deg, #777568, #4a483e 60%, #111); }
        </style>
        <div class="left">
            <div class="corner"><div><svg width="9" height="9"><path d="M1 0h2.500v6.500H9V9H1z" fill="#444"/></svg></div></div>
            <v-ruler></v-ruler>
        </div>
        <div class="main">
            <div class="hr"><h-ruler></h-ruler></div>
            <div class="page"><div class="e">e</div><div class="tb"></div></div>
        </div>
        <word-scroll></word-scroll>`;
    }
}
customElements.define('word-doc', WordDoc);

class WordStatus extends HTMLElement {
    connectedCallback() {
        this.attachShadow({ mode: 'open' });
        this.shadowRoot.innerHTML = `
        <style>
        :host { display: flex; align-items: center; height: 21px; background: linear-gradient(#d9dce1, #e3e5e9); border-top: 1px solid #f4f5f6; box-sizing: border-box; font: 10.800px "Open Sans", sans-serif; color: #505c68; }
        .c { height: 20px; line-height: 20px; padding: 0 0 0 8px; border-right: 1px solid #b4b8be; box-sizing: border-box; white-space: nowrap; }
        .pl { padding-left: 42px; color: #444; }
        .r { margin-left: auto; display: flex; align-items: center; height: 20px; }
        .on { width: 17px; height: 20px; box-sizing: border-box; background: linear-gradient(#fde9a8, #fbc95c); border: 1px solid #c8a050; border-radius: 2px; display: flex; justify-content: center; align-items: center; margin-right: 1px; }
        .v { width: 18px; display: flex; justify-content: center; }
        .pct { width: 44px; text-align: center; margin-right: 3px; }
        .sl { width: 129px; margin-right: 6px; display: flex; align-items: center; position: relative; }
        .rnd { width: 14px; height: 14px; box-sizing: border-box; border-radius: 50%; border: 1px solid #8c9098; background: linear-gradient(#fff, #ccd0d6); font: 700 12px/12px "Liberation Sans", sans-serif; text-align: center; color: #333; flex: none; }
        .ln { flex: 1; height: 1px; background: #8c9098; }
        svg { display: block; }
        .th { position: absolute; left: 62px; top: 0; }
        </style>
        <div class="c" style="width:92px">Strona: 68 z 70</div>
        <div class="c" style="width:88px">Wyrazy: 6 754</div>
        <div class="c pl" style="width:190px">Polski</div>
        <div class="r">
            <div class="on"><svg width="11" height="13"><path d="M.5.5h10v12H.5z" fill="#fff" stroke="#555"/><path d="M2 3h7M2 5h7M2 7h7M2 9h7" stroke="#555"/></svg></div>
            <div class="v"><svg width="12" height="12"><path d="M.5 1.500h5v10h-5zM6.500 1.500h5v10h-5z" fill="#eee" stroke="#777"/><path d="M2 4h2M2 6h2M8 4h2M8 6h2" stroke="#777"/></svg></div>
            <div class="v"><svg width="12" height="13"><path d="M.5.5h9v11h-9z" fill="#eee" stroke="#777"/><path d="M2 3h6M2 5h6" stroke="#777"/><circle cx="9" cy="10" r="3" fill="#2a78c0"/></svg></div>
            <div class="v"><svg width="11" height="12"><path d="M3 1h7M6 3h4M3 5h7M6 7h4M3 9h7M0 1h1M0 5h1M0 9h1" stroke="#777"/></svg></div>
            <div class="v"><svg width="11" height="12"><path d="M1 1h9M1 3h9M1 5h9M1 7h9M1 9h9M1 11h9" stroke="#666"/></svg></div>
            <div class="pct">120%</div>
            <div class="sl">
                <div class="rnd">−</div><div class="ln"></div><div class="rnd">+</div>
                <svg class="th" width="10" height="13"><path d="M.5.5h8v8L4.500 12 .5 8.500z" fill="#f4f5f6" stroke="#777"/></svg>
            </div>
        </div>`;
    }
}
customElements.define('word-status', WordStatus);

// 任务栏图标
const TASK_ICONS = {
    folder: `<path d="M3 10h13l3-3h17v26H3z" fill="#f0dc96" stroke="#b89a50"/><path d="M1 15h36l-2 18H3z" fill="#f8ecb8" stroke="#c8aa60"/><path d="M12 24h14v9h-3v-6h-8v6h-3z" fill="#5aa0d8"/><path d="M8 9h5M15 8h4M22 8h4" stroke="#3a9a3a" stroke-width="2"/>`,
    calc: `<path d="M7 3h25v32H7z" fill="#8ec0e8" stroke="#4a80b0"/><path d="M10 7h19v7H10z" fill="#dcecf8" stroke="#4a80b0"/><text x="26" y="13" font-family="Liberation Sans, sans-serif" font-size="7" fill="#444" text-anchor="end">0</text><path d="M10 18h3v3h-3zM15 18h3v3h-3zM20 18h3v3h-3zM25 18h3v3h-3zM10 23h3v3h-3zM15 23h3v3h-3zM20 23h3v3h-3zM10 28h3v3h-3zM15 28h3v3h-3zM20 28h3v3h-3z" fill="#fff"/><path d="M25 23h3v8h-3z" fill="#e89030"/>`,
    outlook: `<path d="M4 1h29v28H4z" fill="#f8b830" stroke="#d88a10"/><path d="M8 4h22v20H8z" fill="#fdf0c8"/><ellipse cx="15" cy="14" rx="6" ry="8" fill="#fff8e0" stroke="#ee9a20" stroke-width="4"/><path d="M12 22l13-6 8 5v11H12z" fill="#ffe8b0" stroke="#d8a040"/><circle cx="27" cy="15" r="4" fill="#fff" stroke="#c85a10"/><path d="M27 13v2h2" stroke="#c85a10" fill="none"/>`,
    ie: `<circle cx="19" cy="19" r="12" fill="#2a9ae0"/><path d="M11 17h16c0-9-15-9-16 0zM11 21c0 8 12 10 15 3h-5c-2 3-6 2-6-3z" fill="#fff"/><ellipse cx="19" cy="19" rx="19" ry="8" fill="none" stroke="#f0b010" stroke-width="2.500" transform="rotate(-38 19 19)"/>`,
    firefox: `<circle cx="19" cy="19" r="14" fill="#2a58a8"/><path d="M6 24C6 12 12 4 22 5c8 1 13 8 12 16-1 10-12 14-20 11C10 31 7 28 6 24z" fill="#e86010"/><path d="M13 15c4-4 10-4 13 0 3 5 0 12-7 12-5 0-9-4-8-8 2 3 6 4 8 2 0-2-4-2-6-4z" fill="#2a58a8"/><path d="M10 8c3-3 8-4 12-3l-3 4c-3-1-6 0-9-1z" fill="#f8c030"/>`,
    chrome: `<circle cx="19" cy="19" r="14" fill="#e04030"/><path d="M7 12L13 30l6 3 8-14z" fill="#30a040"/><path d="M19 12h14c0 10-4 14-12 14l-1 7c8 0 14-6 14-14 0-3-1-5-1-7z" fill="#f8c820"/><circle cx="19" cy="19" r="7" fill="#fff"/><circle cx="19" cy="19" r="5.500" fill="#3a80e0"/>`,
    paint: `<path d="M4 20c0-9 13-14 22-10 7 3 6 11 0 12-4 0-4 3-3 6-2 5-19 3-19-8z" fill="#d8e4ec" stroke="#8aa"/><circle cx="11" cy="18" r="2.500" fill="#3a80d0"/><circle cx="16" cy="13" r="2.500" fill="#d04030"/><circle cx="11" cy="25" r="2.500" fill="#40a040"/><circle cx="17" cy="25" r="2" fill="#f0c030"/><path d="M22 22l9-17 3 2-9 17z" fill="#a06a30"/><path d="M29 7l2-6 4 3-3 5z" fill="#d8a060"/>`,
    app: `<path d="M6 6h29v27H6z" fill="#f4f6f8" stroke="#b8c0c8"/><path d="M10 10h14v20H10z" fill="#5a9a90"/><path d="M26 11h7M26 14h7M26 17h7M26 20h7" stroke="#889"/><path d="M6 6h29v3H6z" fill="#d8e0e8"/>`,
    webcam: `<circle cx="19" cy="14" r="12" fill="#8ab0d8" stroke="#5a80a8"/><circle cx="21" cy="14" r="6.500" fill="#444" stroke="#222"/><circle cx="21" cy="13" r="2" fill="#888"/><path d="M7 26c3 3 18 3 22 0l1 5H6z" fill="#7aa0c8"/><path d="M22 31l4-3-4-3h3l4 3-4 3zM28 31l4-3-4-3h3l4 3-4 3z" fill="#2a80e0"/>`,
    excel: `<path d="M4 2h28v28l-4 4H4z" fill="#fff" stroke="#2a7a3a" stroke-width="1.500"/><path d="M4 2h28v15L4 30z" fill="#cfe4cc"/><text x="15" y="24" font-family="Liberation Sans, sans-serif" font-weight="700" font-size="24" fill="#2a7a3a" text-anchor="middle">X</text><path d="M14 28l22-8-1 6-20 8z" fill="#f4f8f4" stroke="#8a9a8a"/>`,
    word: `<path d="M4 2h28v28l-4 4H4z" fill="#fff" stroke="#1f4fa8" stroke-width="1.500"/><path d="M4 2h28v15L4 30z" fill="#2f68c8"/><text x="16" y="24" font-family="Liberation Sans, sans-serif" font-weight="700" font-size="24" fill="#fff" text-anchor="middle">W</text><path d="M14 28l22-8-1 6-20 8z" fill="#f4f6fa" stroke="#8a94a8"/>`
};

class TaskBtn extends HTMLElement {
    connectedCallback() {
        const on = this.hasAttribute('on');
        const icon = this.getAttribute('icon');
        this.attachShadow({ mode: 'open' });
        this.shadowRoot.innerHTML = `
        <style>
        :host { display: flex; align-items: center; justify-content: center; width: ${this.getAttribute('w') || 60}px; height: 38px; margin-right: ${this.getAttribute('mr') || 2}px; flex: none; box-sizing: border-box;
            ${on ? 'border: 1px solid #6a6a64; border-radius: 3px; background: linear-gradient(125deg, rgba(255,255,255,.32), rgba(255,255,255,.12) 45%, rgba(255,255,255,.04));' : ''} }
        svg { display: block; }
        </style>
        ${icon === 'bulb' ? BULB(28, 34) : `<svg width="36" height="34" viewBox="0 0 38 36">${TASK_ICONS[icon]}</svg>`}`;
    }
}
customElements.define('task-btn', TaskBtn);

class WinTaskbar extends HTMLElement {
    connectedCallback() {
        this.attachShadow({ mode: 'open' });
        this.shadowRoot.innerHTML = `
        <style>
        :host { display: flex; align-items: center; height: 40px; box-sizing: border-box; padding-top: 1px; border-top: 1px solid #55554f; color: #f0f0f0; font: 10.900px "Open Sans", sans-serif;
            background: linear-gradient(90deg, #13110d, #1c1a14 30%, #161410 60%, #23211b 80%, #1a1813); }
        .orb { width: 38px; height: 38px; margin: 0 11px 0 8px; flex: none; display: block; }
        .tray { margin-left: auto; display: flex; align-items: center; height: 38px; }
        .tray > * { flex: none; }
        .pl { margin-right: 8px; font-size: 11.500px; }
        .clk { width: 80px; text-align: center; line-height: 17px; margin: 0 3px 0 14px; white-space: nowrap; }
        .show { width: 12px; height: 38px; border: 1px solid #55554f; border-right: 0; box-sizing: border-box; background: linear-gradient(#3a3a34, #1a1a14); }
        </style>
        <svg class="orb" viewBox="0 0 38 38">
            <defs><radialGradient id="o" cx=".5" cy=".35" r=".7"><stop offset="0" stop-color="#7ab0d8"/><stop offset=".6" stop-color="#2a68a0"/><stop offset="1" stop-color="#0c2f50"/></radialGradient></defs>
            <circle cx="19" cy="19" r="18" fill="url(#o)" stroke="#111"/>
            <path d="M10 12c3-2 6-1 8 0l-1 6c-2-1-5-2-8 0z" fill="#e85a30"/><path d="M19 12c3 2 6 2 9 0l-1 6c-3 2-6 2-9 0z" fill="#8ac040"/>
            <path d="M9 19c3-2 6-1 8 0l-1 6c-2-1-5-2-8 0z" fill="#4a9ae0"/><path d="M18 19c3 2 6 2 9 0l-1 6c-3 2-6 2-9 0z" fill="#f8c820"/>
            <path d="M4 17C8 6 30 6 34 17 26 12 12 12 4 17z" fill="rgba(255,255,255,.25)"/>
        </svg>
        <task-btn icon="folder"></task-btn>
        <task-btn icon="calc"></task-btn>
        <task-btn icon="outlook"></task-btn>
        <task-btn icon="ie"></task-btn>
        <task-btn icon="firefox"></task-btn>
        <task-btn icon="chrome"></task-btn>
        <task-btn icon="paint"></task-btn>
        <task-btn icon="app" on></task-btn>
        <task-btn icon="webcam"></task-btn>
        <task-btn icon="excel"></task-btn>
        <task-btn icon="word" on w="56" mr="7"></task-btn>
        <task-btn icon="bulb" on w="59"></task-btn>
        <div class="tray">
            <span class="pl">PL</span>
            <svg width="16" height="16" style="margin-right:17px" viewBox="0 0 16 16"><path d="M1 6h14v9H1z" fill="#889" stroke="#ccc"/><path d="M3 8h2M6 8h2M9 8h2M12 8h1M3 11h10" stroke="#fff"/><path d="M8 6V2h5" stroke="#ccc" fill="none"/></svg>
            <svg width="8" height="5" style="margin-right:15px"><path d="M0 5h8L4 0z" fill="#eee"/></svg>
            <svg width="15" height="14" style="margin-right:10px"><path d="M1 11h2v2H1zM4 9h2v4H4zM7 6h2v7H7zM10 3h2v10h-2zM13 1h2v12h-2z" fill="#fff"/></svg>
            <svg width="14" height="20" viewBox="0 0 14 20"><path d="M2 3h10v12H2zM4 0v3M10 0v3M7 15v5" fill="#ddd" stroke="#fff" stroke-width="2"/><path d="M5 6h4v5H5z" fill="#444"/></svg>
            <div class="clk">23:22<br>2014-05-30</div>
            <div class="show"></div>
        </div>`;
    }
}
customElements.define('win-taskbar', WinTaskbar);
</script>
</body>
</html>
